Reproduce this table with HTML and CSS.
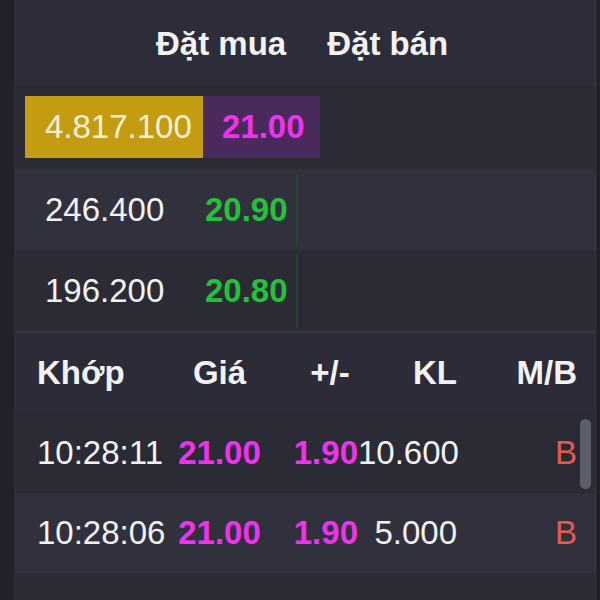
FILE: index.html
```html
<!DOCTYPE html>
<html lang="vi">
<head>
    <meta charset="UTF-8">
    <meta name="viewport" content="width=device-width, initial-scale=1.0">
    <title>Sổ lệnh</title>
    <link rel="stylesheet" href="styles.css">
</head>
<body>
    <div class="panel">
        <div class="book-head">
            <span>Đặt mua</span>
            <span>Đặt bán</span>
        </div>

        <div class="book">
            <div class="book-row best">
                <div class="qty">4.817.100</div>
                <div class="price ceil">21.00</div>
            </div>
            <div class="book-row alt">
                <div class="qty">246.400</div>
                <div class="price up">20.90</div>
                <div class="depth"></div>
            </div>
            <div class="book-row">
                <div class="qty">196.200</div>
                <div class="price up">20.80</div>
                <div class="depth"></div>
            </div>
        </div>

        <div class="trades-head trade-grid">
            <span>Khớp</span>
            <span class="c-price">Giá</span>
            <span class="c-chg">+/-</span>
            <span class="c-vol">KL</span>
            <span class="c-side">M/B</span>
        </div>

        <div class="trades">
            <div class="scroll-thumb"></div>
            <div class="trade-row trade-grid">
                <span>10:28:11</span>
                <span class="c-price ceil">21.00</span>
                <span class="c-chg ceil">1.90</span>
                <span class="c-vol">10.600</span>
                <span class="c-side buy">B</span>
            </div>
            <div class="trade-row trade-grid alt">
                <span>10:28:06</span>
                <span class="c-price ceil">21.00</span>
                <span class="c-chg ceil">1.90</span>
                <span class="c-vol">5.000</span>
                <span class="c-side buy">B</span>
            </div>
            <div class="trade-row trade-grid">
                <span>10:28:03</span>
                <span class="c-price ceil">21.00</span>
                <span class="c-chg ceil">1.90</span>
                <span class="c-vol">1.200</span>
                <span class="c-side buy">B</span>
            </div>
            <div class="trade-row trade-grid alt">
                <span>10:27:58</span>
                <span class="c-price ceil">21.00</span>
                <span class="c-chg ceil">1.90</span>
                <span class="c-vol">3.400</span>
                <span class="c-side buy">B</span>
            </div>
        </div>
    </div>
</body>
</html>
```

FILE: styles.css
```css
html, body {
    margin: 0;
    height: 600px;
    overflow: hidden;
}

body {
    background-color: #20212b;
    font-family: "Liberation Sans", Arial, sans-serif;
    font-size: 33px;
    color: #f2f2f4;
    padding-left: 14px;
    padding-right: 4px;
}

.panel {
    height: 600px;
    display: flex;
    flex-direction: column;
    background-color: #2a2b35;
    border-left: 1px solid #2f303b;
    border-right: 1px solid #3a3b46;
}

/* order book */
.book-head {
    height: 84px;
    display: flex;
    align-items: center;
    gap: 41px;
    padding-left: 141px;
    padding-top: 2px;
    font-weight: bold;
    background-color: #2c2d38;
    border-bottom: 2px solid #24252f;
}

.book-row {
    height: 81px;
    display: grid;
    grid-template-columns: 178px auto 2px;
    justify-content: start;
    align-items: center;
    padding-left: 10px;
    box-sizing: border-box;
}

.book-row.alt {
    background-color: #30313c;
}

.book-row .qty {
    padding-left: 20px;
}

.book-row .price {
    font-weight: bold;
    width: 91px;
    padding-left: 2px;
}

.book-row.best {
    padding-top: 8px;
    padding-bottom: 11px;
    align-items: stretch;
    grid-template-columns: 178px 117px;
}

.book-row.best .qty {
    display: flex;
    align-items: center;
    background-color: #c49c12;
    color: #f6f1d4;
}

.book-row.best .price {
    display: flex;
    align-items: center;
    width: auto;
    padding-left: 19px;
    background-color: #4a2a5c;
}

.depth {
    height: 74px;
    background-color: #23462c;
}

/* trades */
.trade-grid {
    display: grid;
    grid-template-columns: 140px 85px 96px 99px 120px;
    align-items: center;
    padding-left: 22px;
}

.trades-head {
    height: 79px;
    flex-shrink: 0;
    font-weight: bold;
    background-color: #2b2c37;
    border-top: 2px solid #353642;
    border-bottom: 1px solid #272832;
}

.trades {
    flex: 1;
    position: relative;
    overflow: hidden;
}

.scroll-thumb {
    position: absolute;
    top: 6px;
    right: 4px;
    width: 11px;
    height: 70px;
    border-radius: 6px;
    background-color: #5b5d68;
}

.trade-row {
    height: 80px;
}

.trade-row.alt {
    background-color: #30313c;
}

.c-price {
    text-align: center;
    font-weight: bold;
}

.c-chg {
    text-align: right;
    font-weight: bold;
}

.trades-head .c-chg {
    text-align: center;
    padding-left: 40px;
}

.c-vol,
.c-side {
    text-align: right;
}

.ceil {
    color: #ec34ec;
}

.up {
    color: #22c23a;
}

.buy {
    color: #e35a50;
}
```
